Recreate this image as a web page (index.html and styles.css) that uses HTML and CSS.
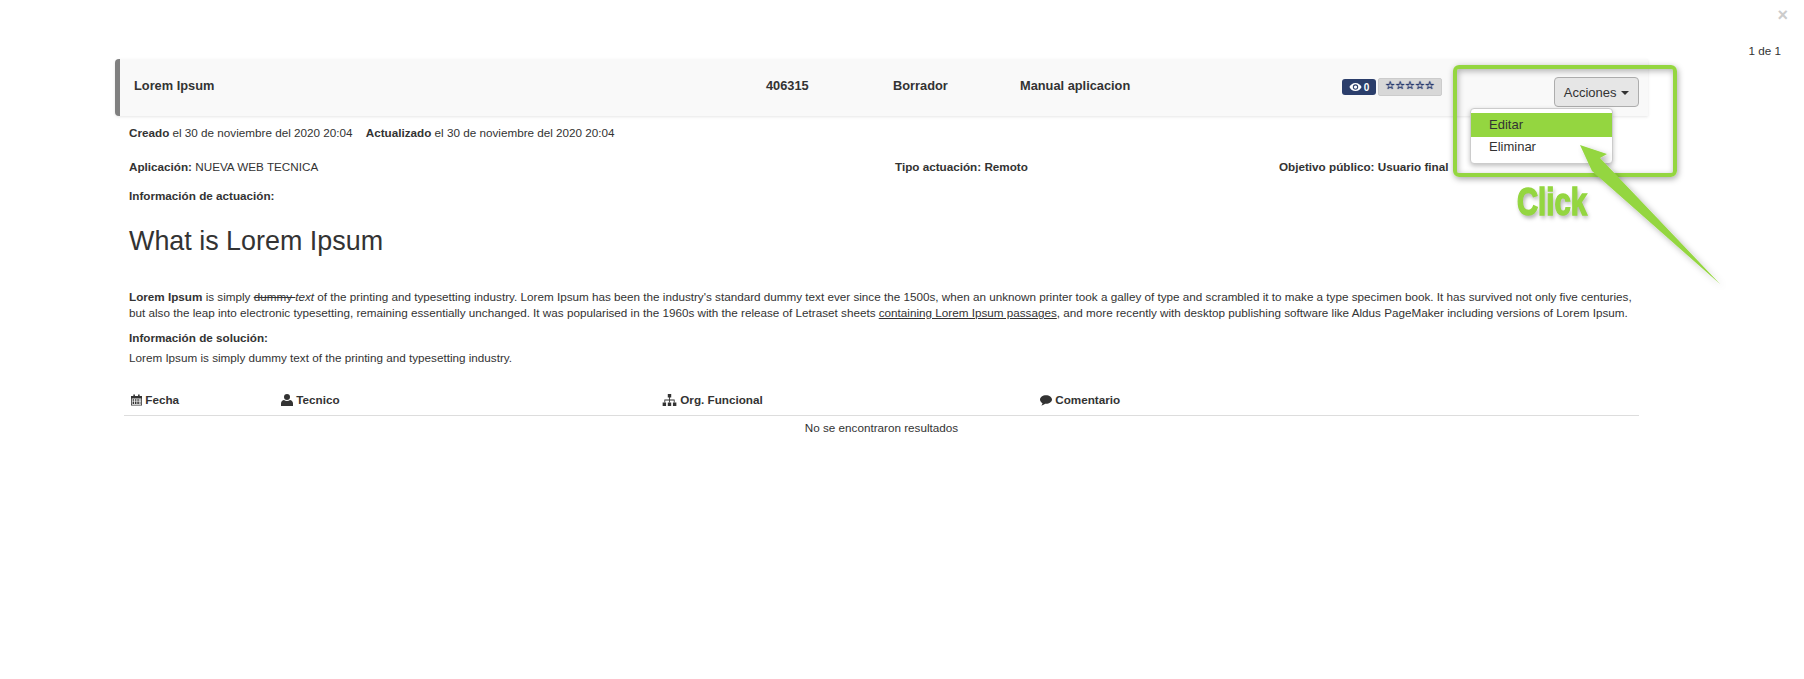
FILE: index.html
```html
<!DOCTYPE html>
<html lang="es">
<head>
    <meta charset="UTF-8">
    <title>Lorem Ipsum</title>
    <link rel="stylesheet" href="styles.css">
</head>
<body>
    <div class="close">&times;</div>
    <div class="pager">1 de 1</div>

    <div class="content">
        <div class="head-row">
            <div class="h-title">Lorem Ipsum</div>
            <div class="h-id">406315</div>
            <div class="h-state">Borrador</div>
            <div class="h-type">Manual aplicacion</div>
            <div class="h-badges">
                <span class="views">
                    <svg class="eye" viewBox="0 0 16 12"><path d="M8 1C4.500 1 1.800 3.200 .5 6c1.300 2.800 4 5 7.500 5s6.200-2.200 7.500-5C14.200 3.200 11.500 1 8 1z" fill="#fff"/><circle cx="8" cy="6" r="3.300" fill="#2b3e6b"/><circle cx="8" cy="6" r="2" fill="#fff"/></svg>
                    0
                </span>
                <span class="stars">&#9734;&#9734;&#9734;&#9734;&#9734;</span>
            </div>
            <div class="h-actions">
                <button class="btn-actions">Acciones <span class="caret"></span></button>
                <ul class="menu">
                    <li class="active">Editar</li>
                    <li>Eliminar</li>
                </ul>
            </div>
        </div>

        <div class="dates">
            <b>Creado</b> el 30 de noviembre del 2020 20:04 <b class="second">Actualizado</b> el 30 de noviembre del 2020 20:04
        </div>

        <div class="info-row">
            <div class="i-app"><b>Aplicación:</b> NUEVA WEB TECNICA</div>
            <div class="i-type"><b>Tipo actuación: Remoto</b></div>
            <div class="i-target"><b>Objetivo público: Usuario final</b></div>
        </div>

        <div class="label">Información de actuación:</div>
        <h2 class="big">What is Lorem Ipsum</h2>
        <p class="text"><b>Lorem Ipsum</b> is simply <s>dummy </s><i>text</i> of the printing and typesetting industry. Lorem Ipsum has been the industry's standard dummy text ever since the 1500s, when an unknown printer took a galley of type and scrambled it to make a type specimen book. It has survived not only five centuries, but also the leap into electronic typesetting, remaining essentially unchanged. It was popularised in the 1960s with the release of Letraset sheets <u>containing Lorem Ipsum passages</u>, and more recently with desktop publishing software like Aldus PageMaker including versions of Lorem Ipsum.</p>
        <div class="label sol">Información de solución:</div>
        <p class="text short">Lorem Ipsum is simply dummy text of the printing and typesetting industry.</p>

        <div class="t-head">
            <div class="c-date">
                <svg class="ico cal" viewBox="0 0 14 14"><path d="M3 0h2v2h4V0h2v2h3v12H0V2h3zM1 5v8h12V5z" fill="#333"/><path d="M2 6h2v2H2zM5 6h2v2H5zM8 6h2v2H8zM11 6h1v2h-1zM2 9h2v3H2zM5 9h2v3H5zM8 9h2v3H8zM11 9h1v3h-1z" fill="#333"/></svg>
                Fecha
            </div>
            <div class="c-tech">
                <svg class="ico" viewBox="0 0 14 14"><circle cx="7" cy="3.500" r="3.500" fill="#333"/><path d="M0 14v-3c0-2.500 2-4 3.500-4 1 .8 2.200 1.200 3.500 1.200S9.500 7.800 10.500 7c1.500 0 3.500 1.500 3.500 4v3z" fill="#333"/></svg>
                Tecnico
            </div>
            <div class="c-org">
                <svg class="ico wide" viewBox="0 0 16 14"><path d="M6 0h4v4H8.500v2.500H14V10h-1V7.500H8.500V10h-1V7.500H3V10H2V6.500h5.500V4H6z" fill="#333"/><path d="M0 10h4v4H0zM6 10h4v4H6zM12 10h4v4h-4z" fill="#333"/></svg>
                Org. Funcional
            </div>
            <div class="c-comment">
                <svg class="ico" viewBox="0 0 14 14"><path d="M7 1.500c3.900 0 7 2.300 7 5s-3.100 5-7 5h-1C5 12.500 3.500 13.300 1.500 13.500c.8-.8 1.300-1.800 1.400-2.800C1.100 9.800 0 8.300 0 6.500c0-2.700 3.100-5 7-5z" fill="#333"/></svg>
                Comentario
            </div>
        </div>
        <div class="no-results">No se encontraron resultados</div>
    </div>

    <!-- green annotation drawn over the screenshot -->
    <div class="note-box"></div>
    <div class="note-click">Click</div>
    <svg class="note-arrow" viewBox="0 0 170 170">
        <defs>
            <filter id="arrowShadow" x="-20%" y="-20%" width="140%" height="140%">
                <feDropShadow dx="3" dy="3" stdDeviation="3" flood-color="#000" flood-opacity=".3"/>
            </filter>
        </defs>
        <path d="M2 2 L29 11 L22 15 L142 141 L14 28 Z" fill="#94d640" filter="url(#arrowShadow)"/>
    </svg>
</body>
</html>
```

FILE: styles.css
```css
body {
    margin: 0;
    background-color: #fff;
    color: #333;
    font-family: "Liberation Sans", Arial, sans-serif;
    font-size: 11.7px;
    line-height: 17px;
}

b {
    font-weight: bold;
}

.close {
    position: absolute;
    top: 7px;
    right: 16px;
    color: #ccc;
    font-size: 18px;
    font-weight: bold;
}

.pager {
    position: absolute;
    top: 42px;
    right: 23px;
}

.content {
    width: 1524px;
    margin-left: 115px;
    padding-top: 59px;
}

.head-row {
    display: flex;
    align-items: center;
    height: 57px;
    margin-right: -9px;
    padding: 0 0 4px 14px;
    background-color: #f9f9f9;
    border-left: 5px solid #808080;
    border-radius: 4px 0 0 4px;
    box-shadow: 0 1px 3px rgba(0, 0, 0, 0.1);
    font-size: 12.8px;
    font-weight: bold;
    box-sizing: border-box;
}

.h-title {
    width: 632px;
}

.h-id {
    width: 127px;
}

.h-state {
    width: 127px;
}

.h-type {
    width: 322px;
}

.h-badges {
    display: flex;
    align-items: center;
    gap: 2px;
    width: 112px;
    margin-top: 3px;
}

.views {
    display: flex;
    align-items: center;
    justify-content: center;
    gap: 2px;
    width: 34px;
    height: 16px;
    background-color: #2b3e6b;
    border-radius: 3px;
    color: #fff;
    font-size: 10px;
}

.eye {
    width: 13px;
    height: 10px;
}

.stars {
    width: 64px;
    height: 18px;
    background-color: #d8d8d8;
    border: 1px solid #ccc;
    border-radius: 2px;
    box-sizing: border-box;
    color: #0a2060;
    font-family: "DejaVu Sans", sans-serif;
    font-size: 11px;
    line-height: 13px;
    font-weight: bold;
    text-align: center;
    text-shadow: 0 0 1px #0a2060, 0 0 1px #0a2060;
    white-space: nowrap;
    overflow: hidden;
}

.h-actions {
    position: relative;
    flex: 1;
    align-self: flex-start;
    margin-top: 18px;
    padding-right: 9px;
}

.btn-actions {
    display: block;
    height: 30px;
    width: 85px;
    margin-left: auto;
    background-color: #e6e6e6;
    border: 1px solid #adadad;
    border-radius: 4px;
    color: #333;
    font-family: inherit;
    font-size: 13px;
}

.caret {
    display: inline-block;
    margin-left: 1px;
    vertical-align: middle;
    border-top: 4px solid #333;
    border-left: 4px solid transparent;
    border-right: 4px solid transparent;
}

.menu {
    position: absolute;
    top: 31px;
    right: 35px;
    width: 141px;
    margin: 0;
    padding: 4px 0 6px;
    list-style: none;
    background-color: #fff;
    border: 1px solid #ccc;
    border-radius: 4px;
    box-shadow: 0 2px 5px rgba(0, 0, 0, 0.25);
    font-size: 13px;
    font-weight: normal;
    text-align: left;
    box-sizing: content-box;
}

.menu li {
    padding: 0 18px;
    height: 20px;
    line-height: 20px;
}

.menu li.active {
    height: 24px;
    line-height: 24px;
    background-color: #94d640;
}

.dates {
    margin-top: 8px;
    padding-left: 14px;
}

.dates .second {
    margin-left: 10px;
}

.info-row {
    display: flex;
    margin-top: 17px;
    padding-left: 14px;
}

.i-app {
    width: 766px;
}

.i-type {
    width: 384px;
}

.label {
    margin-top: 12px;
    padding-left: 14px;
    font-weight: bold;
}

.big {
    margin: 20px 0 0;
    padding-left: 14px;
    font-size: 26.9px;
    line-height: 34px;
    font-weight: normal;
}

.text {
    margin: 31px 0 0;
    padding-left: 14px;
    line-height: 16px;
}

.label.sol {
    margin-top: 8px;
}

.text.short {
    margin-top: 4px;
}

.t-head {
    display: flex;
    margin: 25px 0 0 9px;
    padding: 0 0 7px 7px;
    border-bottom: 1px solid #ddd;
    font-weight: bold;
}

.ico {
    width: 12px;
    height: 12px;
    vertical-align: -2px;
}

.ico.cal {
    width: 11px;
}

.ico.wide {
    width: 15px;
}

.c-date {
    width: 150px;
}

.c-tech {
    width: 381px;
}

.c-org {
    width: 378px;
}

.no-results {
    margin: 3px 0 0 9px;
    text-align: center;
}

.note-box {
    position: absolute;
    left: 1453px;
    top: 65px;
    width: 216px;
    height: 104px;
    border: 4px solid #94d640;
    border-radius: 6px;
    box-shadow: 1px 2px 6px rgba(0, 0, 0, 0.35), inset 1px 2px 6px rgba(0, 0, 0, 0.3);
}

.note-click {
    position: absolute;
    left: 1517px;
    top: 180px;
    color: #94d640;
    font-size: 39px;
    line-height: 44px;
    font-weight: bold;
    -webkit-text-stroke: 1.5px #94d640;
    text-shadow: 2px 3px 5px rgba(0, 0, 0, 0.35);
    transform: scaleX(0.75);
    transform-origin: left top;
}

.note-arrow {
    position: absolute;
    left: 1578px;
    top: 143px;
    width: 170px;
    height: 170px;
}
```
